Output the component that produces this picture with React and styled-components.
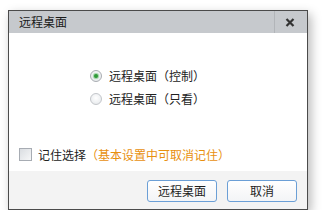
import styled, { createGlobalStyle } from 'styled-components';

const Global = createGlobalStyle`
  body {
    margin: 0;
    background: #ffffff;
    font-family: "Noto Sans CJK SC", "DejaVu Sans", sans-serif;
  }
`;

const Dialog = styled.div`
  box-sizing: border-box;
  margin: 10px 0 0 8px;
  width: 300px;
  height: 200px;
  border: 1px solid #4b4b4b;
  background: #ffffff;
  display: flex;
  flex-direction: column;
  box-shadow: 3px 4px 10px rgba(0, 0, 0, 0.28);
`;

const TitleBar = styled.div`
  height: 22px;
  background: #c6c9cd;
  display: flex;
  align-items: center;
`;

const Title = styled.div`
  flex: 1;
  padding-left: 10px;
  font-size: 12px;
  color: #1a1a1a;
  line-height: 22px;
`;

const Close = styled.div`
  width: 30px;
  height: 22px;
  border-left: 1px solid #b2b5b9;
  display: flex;
  align-items: center;
  justify-content: center;
  padding-right: 2px;
`;

const Body = styled.div`
  flex: 1;
  display: flex;
  flex-direction: column;
  padding: 31px 0 8px 10px;
`;

const RadioGroup = styled.div`
  display: flex;
  flex-direction: column;
  padding-left: 71px;
`;

const RadioRow = styled.label`
  display: flex;
  align-items: center;
  height: 23px;
  font-size: 12px;
  color: #222;
`;

const RadioDot = styled.span`
  box-sizing: border-box;
  width: 12px;
  height: 12px;
  border-radius: 50%;
  border: 1px solid ${p => (p.$checked ? '#a9adb2' : '#c3c6ca')};
  background: radial-gradient(circle at 50% 40%, #ffffff 0%, #eef0f2 60%, #dfe2e5 100%);
  display: flex;
  align-items: center;
  justify-content: center;
  margin-right: 7px;

  &::after {
    content: '';
    display: ${p => (p.$checked ? 'block' : 'none')};
    width: 4px;
    height: 4px;
    border-radius: 50%;
    background: #2f9a38;
    box-shadow: 0 0 1px 1px rgba(60, 170, 70, 0.5);
  }
`;

const Remember = styled.label`
  margin-top: auto;
  display: flex;
  align-items: center;
  font-size: 12px;
  color: #222;
`;

const Check = styled.span`
  box-sizing: border-box;
  width: 13px;
  height: 13px;
  border: 1px solid #a7acb3;
  background: linear-gradient(135deg, #dadde1 0%, #f6f7f8 100%);
  margin-right: 6px;
`;

const Hint = styled.span`
  color: #e8900f;
`;

const Footer = styled.div`
  height: 37px;
  background: #f3f3f3;
  display: flex;
  align-items: center;
  justify-content: flex-end;
  gap: 10px;
  padding-right: 10px;
  padding-top: 1px;
`;

const Button = styled.button`
  box-sizing: border-box;
  width: 70px;
  height: 22px;
  border: 1px solid #6b9fd6;
  border-radius: 3px;
  background: linear-gradient(#ffffff, #f3f4f6);
  font-family: "Noto Sans CJK SC", sans-serif;
  font-size: 12px;
  color: #1e1e1e;
  padding: 0;
`;

export default function App() {
  return (
    <>
      <Global />
      <Dialog>
        <TitleBar>
          <Title>远程桌面</Title>
          <Close>
            <svg width="10" height="9" viewBox="0 0 10 9">
              <path d="M1.5 1 L8.5 8 M8.5 1 L1.5 8" stroke="#333" strokeWidth="2.2" />
            </svg>
          </Close>
        </TitleBar>
        <Body>
          <RadioGroup>
            <RadioRow>
              <RadioDot $checked />
              远程桌面（控制）
            </RadioRow>
            <RadioRow>
              <RadioDot />
              远程桌面（只看）
            </RadioRow>
          </RadioGroup>
          <Remember>
            <Check />
            记住选择<Hint>（基本设置中可取消记住）</Hint>
          </Remember>
        </Body>
        <Footer>
          <Button>远程桌面</Button>
          <Button>取消</Button>
        </Footer>
      </Dialog>
    </>
  );
}
